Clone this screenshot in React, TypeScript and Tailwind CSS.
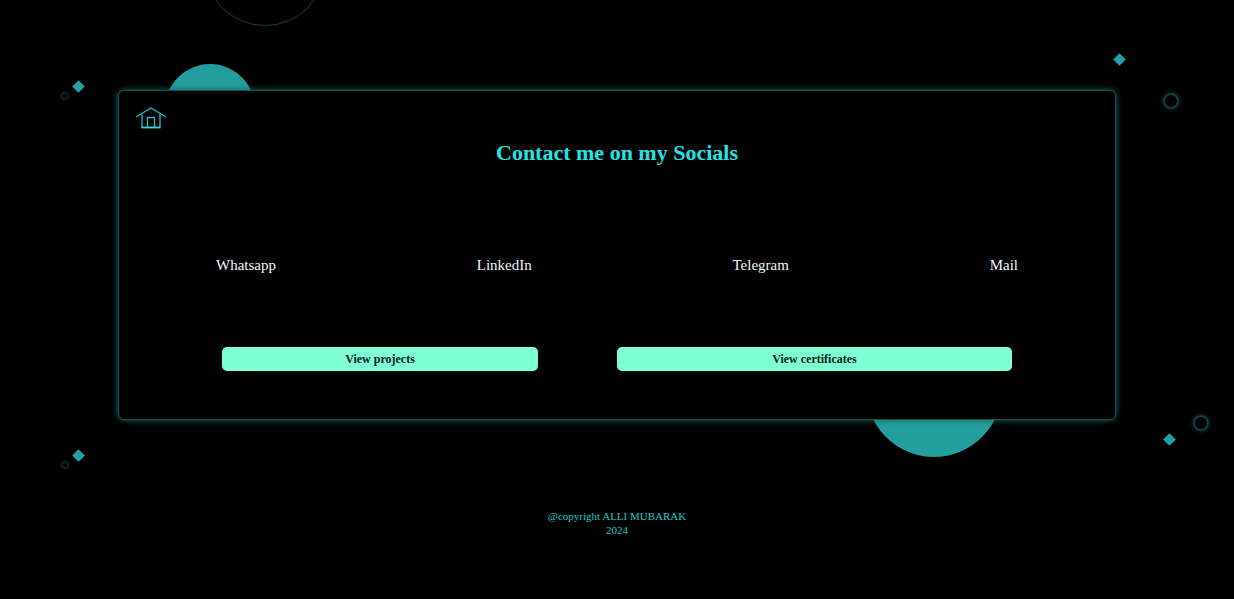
const socials = ["Whatsapp", "LinkedIn", "Telegram", "Mail"];

function HomeIcon() {
  return (
    <svg viewBox="0 0 32 24" className="h-6 w-8" fill="none" stroke="#27b9bb" strokeWidth="1.3" aria-hidden="true">
      <path d="M1 10 L16 1 L31 10" />
      <path d="M7 7 V20.5 M25 7 V20.5" />
      <path d="M12.5 20.5 V10.5 H19.5 V20.5" />
      <path d="M6.5 20.5 H25.5" stroke="#2fdadd" strokeWidth="1.8" />
    </svg>
  );
}

function Decorations() {
  return (
    <div className="pointer-events-none absolute inset-0 overflow-hidden" aria-hidden="true">
      <span className="absolute -top-24 left-[204px] size-[122px] rounded-full border border-[#16433f]" />
      <span className="absolute top-16 left-[165px] size-[90px] rounded-full bg-[#229e9e]" />
      <span className="absolute top-[321px] right-[232px] size-[136px] rounded-full bg-[#229e9e]" />

      <span className="absolute top-[82px] left-[74px] size-[9px] rotate-45 bg-[#27a0a1]" />
      <span className="absolute top-[451px] left-[74px] size-[9px] rotate-45 bg-[#27a0a1]" />
      <span className="absolute top-[55px] right-[110px] size-[9px] rotate-45 bg-[#27a0a1]" />
      <span className="absolute top-[435px] right-[60px] size-[9px] rotate-45 bg-[#27a0a1]" />

      <span className="absolute top-[92px] left-[61px] size-2 rounded-full border-2 border-[#0a2422] shadow-[0_0_3px_#0a2423]" />
      <span className="absolute top-[461px] left-[61px] size-2 rounded-full border-2 border-[#0a2422] shadow-[0_0_3px_#0a2423]" />
      <span className="absolute top-[93px] right-[55px] size-4 rounded-full border-2 border-[#17403d] shadow-[0_0_4px_#11403f]" />
      <span className="absolute top-[415px] right-[25px] size-4 rounded-full border-2 border-[#17403d] shadow-[0_0_4px_#11403f]" />
    </div>
  );
}

export default function App() {
  return (
    <div className="relative min-h-screen bg-black px-[118px] pt-[90px] font-['Liberation_Serif',serif]">
      <Decorations />
      <main className="relative rounded-md border border-[#1c504f] bg-black px-4 pt-4 pb-12 shadow-[0_0_6px_#1b6665]">
        <a href="#home" aria-label="Home" className="block w-8">
          <HomeIcon />
        </a>
        <h1 className="mt-2 text-center text-[22px] leading-7 font-bold text-[#22e5e6]">Contact me on my Socials</h1>
        <nav aria-label="Socials" className="mt-[88px] flex justify-between px-[81px] text-[15px] leading-5 text-[#f0f8ff]">
          {socials.map((name) => (
            <a key={name} href={`#${name.toLowerCase()}`}>
              {name}
            </a>
          ))}
        </nav>
        <div className="mt-[72px] grid grid-cols-[4fr_5fr] gap-[79px] px-[87px] text-xs leading-6 font-bold text-[#07201a]">
          <button type="button" className="rounded-[5px] bg-[#7fffd4]">
            View projects
          </button>
          <button type="button" className="rounded-[5px] bg-[#7fffd4]">
            View certificates
          </button>
        </div>
      </main>
      <footer className="relative mt-[89px] text-center text-[11px] leading-[14px] text-[#20c9c8]">
        <p>@copyright ALLI MUBARAK</p>
        <p>2024</p>
      </footer>
    </div>
  );
}
